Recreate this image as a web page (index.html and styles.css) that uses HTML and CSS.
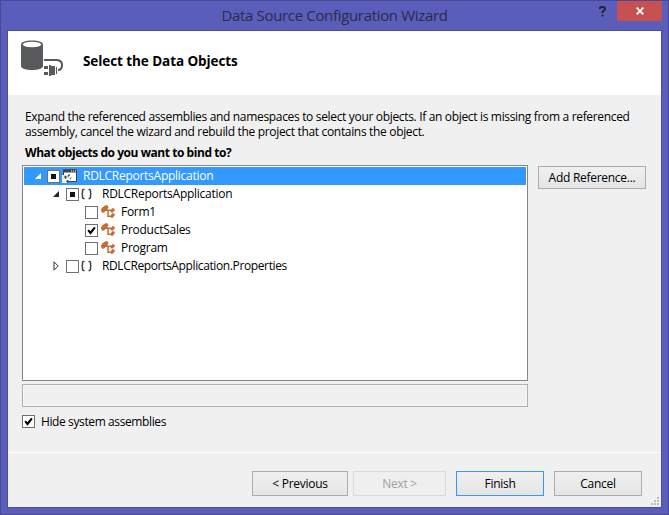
FILE: index.html
```html
<!DOCTYPE html>
<html lang="en">
<head>
<meta charset="utf-8">
<title>Data Source Configuration Wizard</title>
<link rel="stylesheet" href="styles.css">
</head>
<body>
<svg width="0" height="0" class="defs">
  <symbol id="braces" viewBox="0 0 16 16"><path d="M5.500 3.500h-1q-1 0-1 1v2q0 1.500-1 1.500q1 0 1 1.500v2q0 1 1 1h1M9.500 3.500h1q1 0 1 1v2q0 1.500 1 1.500q-1 0-1 1.500v2q0 1-1 1h-1" fill="none" stroke="#424242" stroke-width="1.500"/></symbol>
  <symbol id="class" viewBox="0 0 16 16"><path d="M.8 5.800 2.500 3.300 5.500 1.300H7.500L8.500 3.500 6.500 6.500 3.500 8.800H2ZM6.500 5.500H12V7H8.800V11.500H11V13H7.300V7H6ZM12.200 4.300H13.800L15 6 12.800 8.500H11.200L10.300 7.200ZM12.200 9.300H13.800L15 11 12.800 13.800H11.200L10.300 12.300Z" fill="#ca6b36"/></symbol>
  <symbol id="check" viewBox="0 0 13 13"><path d="M3.200 6.200 5.500 9 9.900 3.300" fill="none" stroke="#000" stroke-width="2.100"/></symbol>
  <symbol id="open" viewBox="0 0 8 8"><path d="M7 1V7H1Z" fill="currentColor"/></symbol>
</svg>
<main class="window">
  <header class="titlebar">
    <h1><span>Data Source Configuration Wizard</span></h1>
    <div class="help"><svg width="8" height="11" viewBox="0 0 8 11"><path d="M1 3V1.800Q1.300 1 3.500 1Q6 1 6 2.700Q6 4 4.700 4.700Q3.500 5.400 3.500 7M3.500 8.500v2" fill="none" stroke="#24242c" stroke-width="2"/></svg></div>
    <div class="close"><svg width="8" height="8" viewBox="0 0 8 8"><path d="M.7.7 7.300 7.300M7.300.7.7 7.300" stroke="#fff" stroke-width="1.900"/></svg></div>
  </header>
  <div class="client">
    <section class="banner">
      <svg width="44" height="38" viewBox="0 0 44 38"><path d="M0 4.500C0-1 22-1 22 4.500V26C22 31.300 0 31.300 0 26Z" fill="#58595b"/><ellipse cx="11" cy="4.500" rx="9.200" ry="2.800" fill="#fff"/><path d="M23 20H36Q41 20.500 41 25Q41 30 37 30" fill="none" stroke="#58595b" stroke-width="2"/><path d="M23 26h4v3h-4zM23 32h4v3h-4zM28 25h2v1h4v9h-4v1h-2zM35 27h1v7h-1z" fill="#58595b"/></svg>
      <h2><span>Select the Data Objects</span></h2>
    </section>
    <section class="body">
      <p class="intro">Expand the referenced assemblies and namespaces to select your objects. If an object is missing from a referenced<br>assembly, cancel the wizard and rebuild the project that contains the object.</p>
      <h3><span>What objects do you want to bind to?</span></h3>
      <div class="columns">
        <div class="left">
          <div class="tree">
            <div class="row selected"><svg class="arrow" viewBox="0 0 8 8"><use href="#open"/></svg><i class="box partial"></i><svg class="icon app" viewBox="0 0 16 16"><path d="M1.500 2H14.500V13.500H1.500Z" fill="#fff" stroke="#424242"/><path d="M1 1.500h14v3H1z" fill="#424242"/><path d="M9 2.500h1v1H9zM11 2.500h1v1h-1zM13 2.500h1v1h-1z" fill="#fff"/><path d="M0 7h8v4H5v4H0z" fill="#efefef"/><path d="M2 9l1.500-1.500L5 9 3.500 11zM6 7l2-1-.5 2-2 1zM4 13l2-1 1 1-1.500 2zM8 10l1.500-1-1 3z" fill="#424242"/></svg><span class="name">RDLCReportsApplication</span></div>
            <div class="row level1"><svg class="arrow" viewBox="0 0 8 8"><use href="#open"/></svg><i class="box partial"></i><svg class="icon"><use href="#braces"/></svg><span class="name">RDLCReportsApplication</span></div>
            <div class="row level2"><i class="box"></i><svg class="icon"><use href="#class"/></svg><span class="name">Form1</span></div>
            <div class="row level2"><i class="box"><svg><use href="#check"/></svg></i><svg class="icon"><use href="#class"/></svg><span class="name">ProductSales</span></div>
            <div class="row level2"><i class="box"></i><svg class="icon"><use href="#class"/></svg><span class="name">Program</span></div>
            <div class="row level1"><svg class="arrow closed" viewBox="0 0 8 10"><path d="M2 .8V9.200L6.200 5Z" fill="#fff" stroke="#333"/></svg><i class="box"></i><svg class="icon"><use href="#braces"/></svg><span class="name props">RDLCReportsApplication.Properties</span></div>
          </div>
          <div class="status"></div>
          <label class="hide"><i class="box"><svg><use href="#check"/></svg></i><span>Hide system assemblies</span></label>
        </div>
        <button class="add"><span>Add Reference...</span></button>
      </div>
    </section>
    <footer>
      <button class="previous"><span>&lt; Previous</span></button>
      <button class="next" disabled><span>Next &gt;</span></button>
      <button class="finish"><span>Finish</span></button>
      <button class="cancel"><span>Cancel</span></button>
      <svg class="grip" width="8" height="8"><path d="M6 0h2v2H6zM3 3h2v2H3zM6 3h2v2H6zM0 6h2v2H0zM3 6h2v2H3zM6 6h2v2H6z" fill="#bdbdbd"/></svg>
    </footer>
  </div>
</main>
</body>
</html>
```
FILE: styles.css
```css
* { box-sizing: border-box; }
body { margin: 0; font: 12px/15px "Open Sans", "Noto Sans", sans-serif; color: #000; overflow: hidden; }
h1, h2, h3, p { margin: 0; }
.defs { position: absolute; }
svg { display: block; flex: none; }
span { white-space: nowrap; }
.window { width: 669px; height: 515px; background: #5b5dbb; border: 1px solid #484a95; padding: 0 6px 6px; }
.titlebar { height: 29px; position: relative; display: flex; justify-content: center; }
h1 { font-size: 15px; line-height: 29px; font-weight: 400; color: #2b2b45; letter-spacing: -.33px; }
.help { position: absolute; left: 592px; top: 5px; }
.close { position: absolute; left: 610px; top: 0; width: 45px; height: 20px; background: #c75050; display: grid; place-items: center; }
.client { height: 478px; border: 1px solid #4c4d9e; background: #f0f0f0; display: flex; flex-direction: column; }
.banner { height: 64px; background: #fff; display: flex; padding: 9px 0 0 13px; }
h2 { font-size: 13.5px; line-height: 18px; margin: 12px 0 0 18px; letter-spacing: -.08px; }
.body { padding: 14px 14px 0; height: 357px; }
.intro { padding-left: 3px; letter-spacing: -.33px; white-space: nowrap; }
h3 { font-size: 12px; line-height: 15px; padding-left: 3px; margin: 6px 0 5px; letter-spacing: -.45px; }
.columns { display: flex; gap: 10px; align-items: flex-start; }
.left { width: 506px; }
.tree { height: 216px; background: #fff; border: 1px solid #828790; padding: 1px; }
.row { display: flex; align-items: center; height: 18px; padding-left: 10px; }
.selected { background: #3399ff; color: #fff; }
.level1 { padding-left: 28px; }
.level2 { padding-left: 61px; }
.arrow { width: 8px; height: 8px; margin-right: 5px; color: #222; }
.level1 .arrow { margin-right: 6px; }
.selected .arrow { color: #fff; }
.closed { height: 10px; }
.box { width: 13px; height: 13px; border: 1px solid #707070; background: #fff; display: block; flex: none; }
.box svg { width: 13px; height: 13px; margin: -1px; }
.partial { display: grid; place-items: center; }
.partial::before { content: ""; width: 5px; height: 5px; background: #111; }
.icon { width: 16px; height: 16px; margin-left: 2px; }
.level1 .icon { margin-left: 0; }
.level2 .icon { margin-left: 2px; }
.name { margin: 0 0 2px 5px; letter-spacing: -.27px; }
.level1 .name { margin-left: 7px; }
.level1 .props { letter-spacing: -.38px; }
.status { height: 23px; border: 1px solid #adadb2; box-shadow: inset 0 0 0 1px #f8f8f8; margin-top: 3px; }
.hide { display: flex; align-items: center; height: 15px; margin-top: 7px; gap: 6px; letter-spacing: -.39px; }
button { font: inherit; letter-spacing: -.28px; color: #000; padding: 0; border: 1px solid #acacac; background: linear-gradient(#f0f0f0, #e5e5e5); height: 25px; }
.add { width: 108px; height: 23px; margin-top: 1px; }
footer { height: 55px; border-top: 1px solid #fff; display: flex; padding: 18px 0 0 244px; position: relative; }
.previous { width: 96px; }
.next { width: 93px; margin: 0 10px 0 5px; color: #a0a0a0; background: #efefef; border-color: #d9d9d9; }
.finish { width: 88px; margin-right: 10px; border-color: #3399ff; }
.cancel { width: 88px; }
.grip { position: absolute; right: 2px; bottom: 2px; }
```
